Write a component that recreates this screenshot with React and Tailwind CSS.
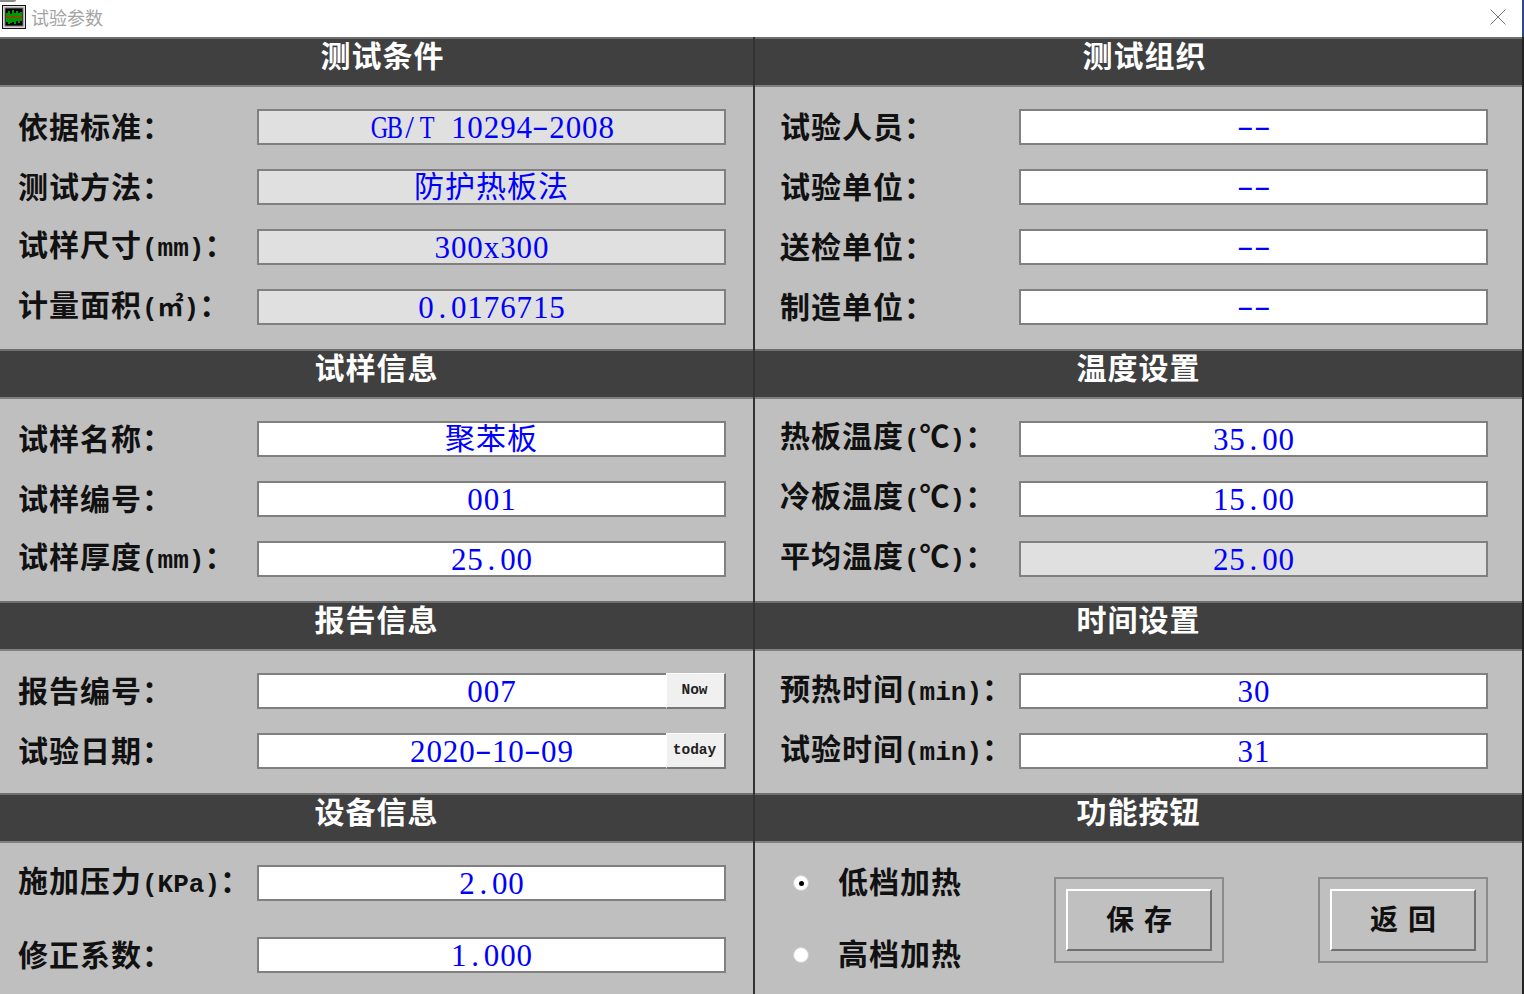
import React from "react";

const cjk = "font-['Liberation_Serif','Noto_Sans_CJK_SC',sans-serif]";
const mono = "font-['Liberation_Mono','Noto_Sans_CJK_SC',monospace]";

// every latin character sits in a half-width cell, as in the old GDI font
function Cell({ ch }) {
  if (ch === "-") return <span className="inline-block w-[16.4px] -translate-y-[2px] scale-x-[1.6] text-center">-</span>;
  if (/[A-Z]/.test(ch)) return <span className="inline-block w-[16.4px] scale-x-[0.78] text-center">{ch}</span>;
  return <span className="inline-block w-[16.4px] text-center">{ch}</span>;
}

function Field({ value, readOnly, button, chinese }) {
  return (
    <div
      className={`relative flex h-9 flex-1 items-center justify-center whitespace-pre border-2 border-[#808080] leading-none text-[#0000ff] ${
        readOnly ? "bg-[#e0e0e0]" : "bg-white"
      } ${chinese ? "text-[30px] tracking-[1px]" : "text-[31px]"}`}
    >
      {chinese ? value : value.split("").map((ch, i) => <Cell key={i} ch={ch} />)}
      {button && (
        <div className={`absolute -top-[2px] -right-[2px] flex h-9 w-[60px] items-center justify-center border-t border-l border-r-2 border-b-2 border-t-white border-l-white border-r-[#777] border-b-[#777] bg-[#f0f0f0] pr-[2px] text-[14.5px] font-bold text-[#222] ${mono}`}>
          {button}
        </div>
      )}
    </div>
  );
}

function Row({ label, unit, ...field }) {
  return (
    <div className="flex items-center">
      <div className={`w-[239px] shrink-0 whitespace-nowrap text-[30px] font-bold leading-none tracking-[1px] text-[#111] ${unit ? "pb-[2px]" : "pt-[2px]"}`}>
        {label}
        {unit && <span className={`text-[26px] tracking-normal ${mono}`}>{unit}</span>}
        ：
      </div>
      <Field {...field} />
    </div>
  );
}

function Header({ title, shift }) {
  return (
    <div className={`flex h-[50px] items-center justify-center border-y-2 border-t-[#6e6e6e] border-b-[#808080] bg-[#404040] pb-[10px] text-[30px] font-bold leading-none tracking-[1px] text-white ${shift ? "pl-3" : ""}`}>
      {title}
    </div>
  );
}

function Section({ title, shift, rows, inset }) {
  return (
    <section>
      <Header title={title} shift={shift} />
      <div className={`flex flex-col gap-6 pt-[22px] pb-6 ${inset}`}>
        {rows.map((r) => (
          <Row key={r.label} {...r} />
        ))}
      </div>
    </section>
  );
}

function AppIcon() {
  return (
    <svg width="24" height="24" viewBox="0 0 24 24" className="-mt-[3px] ml-[1px] shrink-0">
      <rect x="0.5" y="0.5" width="23" height="23" fill="#d8d8d8" stroke="#111" />
      <rect x="3" y="3" width="18" height="18" fill="#000" stroke="#777" />
      <path d="M5 8v9M7 6v13M9 9v9M11 5v12M13 8v11M15 6v10M17 8v10M19 7v9" stroke="#00ff00" strokeWidth="1.2" />
      <path d="M4 12h16" stroke="#ff0000" strokeWidth="1" />
    </svg>
  );
}

function Radio({ checked, label }) {
  return (
    <div className="flex h-9 items-center">
      <div className="flex h-4 w-4 items-center justify-center rounded-full border border-[#d0d0d0] bg-white">
        {checked && <div className="h-[5px] w-[5px] rounded-full bg-black" />}
      </div>
      <span className="ml-[29px] text-[30px] font-bold leading-none tracking-[1px] text-[#111]">{label}</span>
    </div>
  );
}

function GroupButton({ label }) {
  return (
    <div className="border-2 border-[#8c8c8c] p-[10px]">
      <button className="flex h-[62px] w-[146px] items-center justify-center gap-[10px] border-2 border-t-white border-l-white border-r-[#707070] border-b-[#707070] bg-[#c0c0c0] pt-[2px] text-[28px] font-bold leading-none text-[#111]">
        {label.map((c) => (
          <span key={c}>{c}</span>
        ))}
      </button>
    </div>
  );
}

const leftInset = "pl-[18px] pr-[27px]";
const rightInset = "pl-[25px] pr-[34px]";
const celsius = <>(<span className="text-[30px]">℃</span>)</>;

export default function App() {
  return (
    <div className={`relative h-[994px] w-[1524px] overflow-hidden bg-white ${cjk}`}>
      <div className="absolute top-0 left-0 h-[2px] w-4 rounded-br-sm bg-[#8a8a8a]" />

      {/* title bar */}
      <div className="flex h-[37px] items-center justify-between border-r-2 border-[#2b4a8a] pl-[1px] pr-[16px]">
        <div className="flex items-center gap-[5px]">
          <AppIcon />
          <span className="pb-[3px] font-['Noto_Sans_CJK_SC',sans-serif] text-[18px] text-[#a3a3a3]">试验参数</span>
        </div>
        <svg width="16" height="16" viewBox="0 0 16 16" className="-mt-[3px]">
          <path d="M0.5 0.5l15 15M15.5 0.5l-15 15" stroke="#777" strokeWidth="1" fill="none" />
        </svg>
      </div>

      <div className="flex h-[957px] border-r-2 border-[#222] bg-[#bfbfbf]">
        {/* left column */}
        <div className="w-[753px] shrink-0 border-r-2 border-[#333] box-content">
          <Section
            title="测试条件"
            shift
            inset={leftInset}
            rows={[
              { label: "依据标准", value: "GB/T 10294-2008", readOnly: true },
              { label: "测试方法", value: "防护热板法", readOnly: true, chinese: true },
              { label: "试样尺寸", unit: "(mm)", value: "300x300", readOnly: true },
              { label: "计量面积", unit: "(㎡)", value: "0.0176715", readOnly: true },
            ]}
          />
          <Section
            title="试样信息"
            inset={leftInset}
            rows={[
              { label: "试样名称", value: "聚苯板", chinese: true },
              { label: "试样编号", value: "001" },
              { label: "试样厚度", unit: "(mm)", value: "25.00" },
            ]}
          />
          <Section
            title="报告信息"
            inset={leftInset}
            rows={[
              { label: "报告编号", value: "007", button: "Now" },
              { label: "试验日期", value: "2020-10-09", button: "today" },
            ]}
          />
          <section>
            <Header title="设备信息" />
            <div className={`flex flex-col gap-9 pt-[22px] ${leftInset}`}>
              <Row label="施加压力" unit="(KPa)" value="2.00" />
              <Row label="修正系数" value="1.000" />
            </div>
          </section>
        </div>

        {/* right column */}
        <div className="flex-1">
          <Section
            title="测试组织"
            shift
            inset={rightInset}
            rows={[
              { label: "试验人员", value: "--" },
              { label: "试验单位", value: "--" },
              { label: "送检单位", value: "--" },
              { label: "制造单位", value: "--" },
            ]}
          />
          <Section
            title="温度设置"
            inset={rightInset}
            rows={[
              { label: "热板温度", unit: celsius, value: "35.00" },
              { label: "冷板温度", unit: celsius, value: "15.00" },
              { label: "平均温度", unit: celsius, value: "25.00", readOnly: true },
            ]}
          />
          <Section
            title="时间设置"
            inset={rightInset}
            rows={[
              { label: "预热时间", unit: "(min)", value: "30" },
              { label: "试验时间", unit: "(min)", value: "31" },
            ]}
          />
          <section>
            <Header title="功能按钮" />
            <div className="flex items-start pl-[38px] pr-[34px]">
              <div className="flex flex-col gap-9 pt-[22px]">
                <Radio checked label="低档加热" />
                <Radio label="高档加热" />
              </div>
              <div className="ml-[92px] mt-[34px]">
                <GroupButton label={["保", "存"]} />
              </div>
              <div className="ml-auto mt-[34px]">
                <GroupButton label={["返", "回"]} />
              </div>
            </div>
          </section>
        </div>
      </div>
    </div>
  );
}
